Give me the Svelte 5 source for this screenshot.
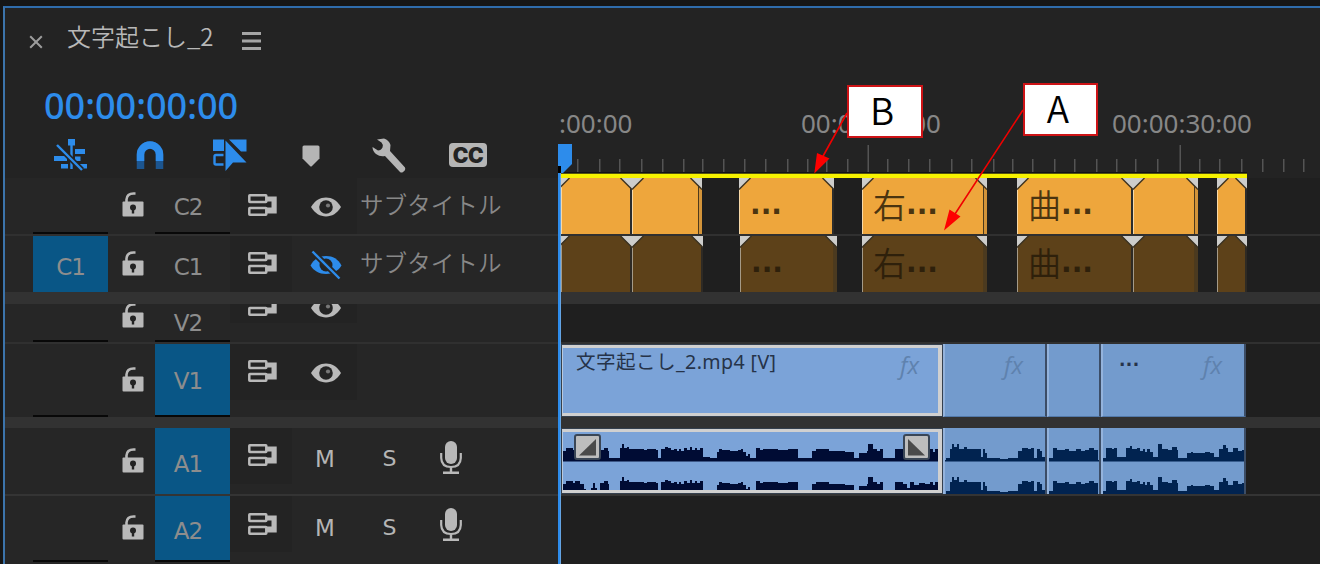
<script lang="ts">
  type Clip = { start: number; end: number; label?: string; fx?: boolean; selected?: boolean; edge?: string };

  const laneStart = 558;
  const laneWidth = 762;

  const tracks = [
    { id: 'c2', label: 'C2', kind: 'caption', source: '', target: false, visible: true },
    { id: 'c1', label: 'C1', kind: 'caption', source: 'C1', target: false, visible: false },
    { id: 'v2', label: 'V2', kind: 'video', source: '', target: false, visible: true },
    { id: 'v1', label: 'V1', kind: 'video', source: '', target: true, visible: true },
    { id: 'a1', label: 'A1', kind: 'audio', source: '', target: true, visible: true },
    { id: 'a2', label: 'A2', kind: 'audio', source: '', target: true, visible: true }
  ];

  const clips: Record<string, Clip[]> = {
    c2: [
      { start: 561, end: 632, edge: 'dark' },
      { start: 632, end: 702, edge: 'thin' },
      { start: 739, end: 834, label: '...', edge: 'dark' },
      { start: 862, end: 987, label: '右...', edge: 'thin' },
      { start: 1017, end: 1133, label: '曲...', edge: 'dark' },
      { start: 1133, end: 1198, edge: 'thin' },
      { start: 1217, end: 1247, edge: 'dark' }
    ],
    c1: [
      { start: 561, end: 632, edge: 'dark' },
      { start: 632, end: 703, edge: 'dark' },
      { start: 740, end: 837, label: '...', edge: 'thin' },
      { start: 862, end: 987, label: '右...', edge: 'thin' },
      { start: 1017, end: 1133, label: '曲...', edge: 'dark' },
      { start: 1133, end: 1198, edge: 'thin' },
      { start: 1217, end: 1247, edge: 'dark' }
    ],
    v1: [
      { start: 561, end: 943, label: '文字起こし_2.mp4 [V]', fx: true, selected: true },
      { start: 943, end: 1047, fx: true },
      { start: 1047, end: 1101 },
      { start: 1101, end: 1246, label: '...', fx: true }
    ],
    a1: [
      { start: 561, end: 943, selected: true },
      { start: 943, end: 1047 },
      { start: 1047, end: 1101 },
      { start: 1101, end: 1246 }
    ]
  };

  // [x, peak height] steps, each one holds until the next
  const peaks: [number, number][][] = [
    [
      [562, 10], [566, 13], [573, 11], [575, 13], [580, 10], [584, 5], [586, 3], [591, 6], [593, 11], [595, 6],
      [597, 3], [600, 11], [604, 13], [608, 10], [609, 3], [620, 13], [622, 17], [624, 13], [627, 14], [629, 12],
      [644, 11], [647, 12], [656, 11], [658, 3], [661, 12], [665, 14], [668, 13], [671, 11], [674, 12], [677, 10],
      [679, 12], [681, 10], [684, 13], [687, 11], [690, 14], [692, 11], [695, 13], [697, 11], [700, 13], [703, 4],
      [710, 3], [717, 9], [719, 12], [722, 11], [730, 10], [738, 11], [741, 12], [743, 9], [746, 5], [748, 7],
      [750, 3], [756, 13], [760, 11], [763, 12], [772, 12], [778, 11], [788, 12], [798, 3], [812, 10], [816, 12],
      [829, 10], [840, 10], [845, 9], [854, 3], [859, 8], [867, 10], [868, 17], [873, 12], [877, 10], [880, 12],
      [883, 3], [895, 12], [903, 10], [907, 6], [910, 12], [914, 9], [919, 11], [925, 10], [930, 12], [933, 9],
      [935, 12], [939, 10], [941, 3], [943, 3]
    ],
    [
      [946, 3], [950, 12], [952, 17], [954, 14], [957, 17], [959, 12], [964, 14], [967, 12], [978, 12], [981, 4],
      [983, 12], [985, 8], [987, 3], [1000, 2], [1008, 3], [1018, 10], [1022, 13], [1028, 12], [1031, 13], [1034, 3],
      [1037, 12], [1040, 10], [1042, 4], [1045, 4]
    ],
    [
      [1049, 3], [1053, 13], [1057, 11], [1065, 12], [1069, 10], [1076, 12], [1081, 10], [1085, 11], [1089, 13],
      [1094, 11], [1098, 11]
    ],
    [
      [1102, 3], [1106, 13], [1112, 12], [1114, 13], [1117, 4], [1126, 13], [1130, 15], [1132, 12], [1137, 13],
      [1140, 10], [1143, 12], [1145, 9], [1147, 12], [1150, 9], [1153, 4], [1158, 17], [1162, 12], [1168, 11],
      [1172, 14], [1177, 11], [1178, 3], [1187, 8], [1191, 9], [1193, 8], [1205, 9], [1210, 8], [1214, 4],
      [1219, 12], [1223, 16], [1226, 13], [1228, 9], [1233, 13], [1238, 10], [1242, 11], [1244, 11]
    ]
  ];

  const ticks = [
    577, 599, 619, 641, 662, 683, 702, 723, 744, 765, 787, 807, 826, 847, 887, 908, 929, 951, 971, 993, 1012, 1032,
    1054, 1074, 1096, 1116, 1135, 1157, 1199, 1219, 1241, 1262, 1283, 1303
  ];
  const majorTicks = [867.5, 1179.5];
  const marks = [
    { x: 559, text: ':00:00' },
    { x: 801, text: '00:00:15:00' },
    { x: 1112, text: '00:00:30:00' }
  ];

  function gapBefore(list: Clip[], i: number) {
    return list[i].start - (i === 0 ? laneStart : list[i - 1].end);
  }

  function wavePath(steps: [number, number][], left: number, base: number) {
    let d = `M${steps[0][0] - left} ${base}`;
    steps.forEach(([x, h], i) => {
      const next = steps[i + 1] ? steps[i + 1][0] : x;
      d += `V${base - h}H${next - left}`;
    });
    return d + `V${base}Z`;
  }
</script>

{#snippet corner(side: string)}
  <svg class="corner {side}" width="12" height="12" viewBox="0 0 12 12">
    <path d="M0 0H11L0 11Z" fill="#cdcdcb" />
    <path d="M11.5 0L0 11.5" stroke="#3d3424" stroke-width="1.4" />
  </svg>
{/snippet}

{#snippet eye()}
  <svg width="32" height="20" viewBox="0 0 32 20">
    <path d="M1 10C5 3.5 10 .6 16 .6S27 3.5 31 10C27 16.5 22 19.4 16 19.4S5 16.5 1 10Z" fill="#b9b9b9" />
    <circle cx="16" cy="10" r="6.8" fill="#232323" />
    <circle cx="18" cy="8.5" r="2.1" fill="#777" />
  </svg>
{/snippet}

{#snippet eyeOff()}
  <svg width="34" height="30" viewBox="0 0 34 30">
    <path d="M1.5 15.500C5 9 10 6 17 6S29 9 32.500 15.500C29 21 24 24 17 24S5 21 1.500 15.500Z" fill="#2d8ceb" />
    <circle cx="17" cy="15" r="6.500" fill="#232323" />
    <path d="M3.500 1.500L30.500 28.500" stroke="#262626" stroke-width="6" />
    <path d="M3.500 1.500L30.500 28.500" stroke="#2d8ceb" stroke-width="2.400" />
  </svg>
{/snippet}

<div class="panel">
  <div class="tab">
    <svg class="close" width="14" height="14" viewBox="0 0 14 14">
      <path d="M1.200 1.200L12.800 12.800M12.800 1.200L1.200 12.800" stroke="#9c9c9c" stroke-width="2" />
    </svg>
    <span class="title">文字起こし_2</span>
    <svg width="19" height="18" viewBox="0 0 19 18">
      <path d="M0 1.500H19M0 9H19M0 16.500H19" stroke="#a5a5a5" stroke-width="2.800" />
    </svg>
  </div>

  <div class="top">
    <div class="controls">
      <div class="timecode">00:00:00:00</div>
      <div class="toolbar">
        <svg width="35" height="33" viewBox="0 0 35 33" fill="#2d8ceb">
          <rect x="15" y="0" width="7" height="6.500" />
          <rect x="17.300" y="6" width="2.400" height="24" />
          <rect x="22" y="10" width="10" height="5" />
          <rect x="1" y="17" width="13" height="5" />
          <rect x="22" y="17.500" width="5.500" height="4.500" />
          <rect x="8" y="25" width="7" height="4.500" />
          <rect x="24" y="25" width="10" height="4.500" />
          <path d="M4 6L29 31" stroke="#232323" stroke-width="5.400" />
          <path d="M4 6L29 31" stroke="#2d8ceb" stroke-width="2.400" />
        </svg>
        <svg width="28" height="30" viewBox="0 0 28 30">
          <path d="M4.500 29V14.500a9.500 9.500 0 0 1 19 0V29" fill="none" stroke="#1c558f" stroke-width="7.500" />
          <path d="M4.500 21V14.500a9.500 9.500 0 0 1 19 0V21" fill="none" stroke="#2d8ceb" stroke-width="7.500" />
        </svg>
        <svg width="34" height="34" viewBox="0 0 34 34">
          <path d="M0 1.500H11V13H0ZM16 1.500H33.500V13.500H28Z" fill="#2d8ceb" />
          <path d="M10.500 17H3q-1.500 0-1.500 1.500V25q0 1.500 1.500 1.500H10.500" fill="none" stroke="#2d8ceb" stroke-width="2.400" />
          <path d="M12.500 2.500V33L20 24.500H33.500Z" fill="#2d8ceb" />
        </svg>
        <svg class="marker" width="18" height="22" viewBox="0 0 18 22">
          <path d="M2 .500H16Q17.500 .500 17.500 2V13.500L9.500 21.500H8.500L.500 13.500V2Q.500 .500 2 .500Z" fill="#b5b5b5" />
        </svg>
        <svg width="34" height="35" viewBox="0 0 34 35">
          <path d="M5 1.500L12 .500Q17 2 18.500 7L18 13L33 29.500Q34 32 31 34Q29.500 35 28 34L13 18Q8 19 4 16Q.500 13 .500 9L6 12.500Q9 12.500 10.500 9.500Q11.500 6.500 9.500 4.500Z" fill="#b5b5b5" />
        </svg>
        <span class="cc">CC</span>
      </div>
    </div>

    <svg class="ruler" width={laneWidth} height="98" viewBox="{laneStart} 80 {laneWidth} 98">
      {#each marks as mark}
        <text x={mark.x} y="133">{mark.text}</text>
      {/each}
      {#each ticks as x}
        <rect {x} y="159" width="1.500" height="13" fill="#545454" />
      {/each}
      {#each majorTicks as x}
        <rect {x} y="145" width="1.500" height="27" fill="#545454" />
      {/each}
      <rect x="561" y="172" width="686" height="2" fill="#101018" />
      <rect x="561" y="173.700" width="686" height="4.300" fill="#f6f200" />
      <path d="M558 144H572V164L563 173H558Z" fill="#2d8ceb" />
      <rect x="558" y="166" width="3" height="7" fill="#000" />
    </svg>
  </div>

  {#each tracks as track}
    <div class="track {track.id} {track.kind}">
      <div class="head">
        <div class="patch" class:on={track.source}><span class="source">{track.source}</span></div>
        <div class="lock">
          <svg width="22" height="25" viewBox="0 0 22 25">
            <path d="M4.500 11V7.500Q5 1.500 11.500 1.500H13.500" fill="none" stroke="#b9b9b9" stroke-width="2.600" />
            <rect x=".500" y="9.500" width="21" height="15" rx="1" fill="#b9b9b9" />
            <circle cx="11" cy="15.500" r="3" fill="#232323" />
            <rect x="9.800" y="16" width="2.400" height="5.500" fill="#232323" />
          </svg>
        </div>
        <div class="patch" class:on={track.target}><span>{track.label}</span></div>
        <div class="sync">
          <svg width="29" height="22" viewBox="0 0 29 22">
            <path d="M18 2.500H28.700V19.500H18V13.500H23.500V7.500H18Z" fill="#b9b9b9" />
            <rect x="1.300" y="1.300" width="17" height="6.700" rx=".500" fill="#232323" stroke="#b9b9b9" stroke-width="2.500" />
            <rect x="1.300" y="14" width="17" height="6.700" rx=".500" fill="#232323" stroke="#b9b9b9" stroke-width="2.500" />
          </svg>
        </div>
        {#if track.kind === 'audio'}
          <div class="toggle">M</div>
          <div class="toggle solo">S</div>
          <div class="mic">
            <svg width="22" height="33" viewBox="0 0 22 33">
              <rect x="5" y="0" width="12" height="23" rx="6" fill="#b9b9b9" />
              <path d="M1.200 12V17Q1.500 26 11 26T20.800 17V12" fill="none" stroke="#b9b9b9" stroke-width="2.200" />
              <path d="M11 26V32M3 31.700H19" stroke="#b9b9b9" stroke-width="2.400" />
            </svg>
          </div>
        {:else}
          <div class="eye">
            {#if track.visible}{@render eye()}{:else}{@render eyeOff()}{/if}
          </div>
          {#if track.kind === 'caption'}
            <div class="name">サブタイトル</div>
          {/if}
        {/if}
      </div>

      <div class="lane">
        {#each clips[track.id] ?? [] as clip, i}
          <div
            class="clip {clip.edge ?? ''}"
            class:selected={clip.selected}
            class:first={i === 0}
            style:margin-left="{gapBefore(clips[track.id], i)}px"
            style:width="{clip.end - clip.start}px"
          >
            {#if track.kind === 'caption'}
              {@render corner('left')}
              {@render corner('right')}
              {#if clip.label}
                {#if clip.label.length > 3}<span class="kanji">{clip.label[0]}</span>{/if}
                <span class="dots">...</span>
              {/if}
            {:else if track.kind === 'video'}
              {#if clip.label}<span class="label" class:short={clip.label === '...'}>{clip.label}</span>{/if}
              {#if clip.fx}<span class="fx">fx</span>{/if}
            {:else}
              <svg class="wave" width={clip.end - clip.start} height="66">
                <path d={wavePath(peaks[i], clip.start, 33)} />
                <path d={wavePath(peaks[i], clip.start, 66)} />
                <rect x="1" y="32" width={clip.end - clip.start - 3} height="1.500" />
              </svg>
              {#if clip.selected}
                <div class="fades">
                  <svg width="27" height="26" viewBox="0 0 27 26">
                    <rect x="1" y="1" width="25" height="24" rx="2" fill="#bdbdbd" stroke="#3a4656" stroke-width="2" />
                    <path d="M5 21.500L22 5V21.500Z" fill="#4a4a4a" />
                  </svg>
                  <svg width="27" height="26" viewBox="0 0 27 26">
                    <rect x="1" y="1" width="25" height="24" rx="2" fill="#bdbdbd" stroke="#3a4656" stroke-width="2" />
                    <path d="M5 5V21.500H22Z" fill="#4a4a4a" />
                  </svg>
                </div>
              {/if}
            {/if}
          </div>
        {/each}
      </div>
    </div>
  {/each}
</div>

<div class="playhead"></div>

<svg class="arrows" width="1320" height="564" viewBox="0 0 1320 564">
  <path d="M847 113L822 158M1023 110L955 214" stroke="#f00000" stroke-width="1.600" />
  <path d="M814.300 173.500L817 153L829.500 158.500ZM944 230.500L949.500 209.500L960.500 216.500Z" fill="#fe0000" />
</svg>
<div class="callout b">B</div>
<div class="callout a">A</div>

<style>
  :global(body) {
    background: #161616;
    overflow: hidden;
  }

  .panel {
    margin: 6px 0 0 3px;
    width: 1315px;
    height: 556px;
    border-top: 2px solid #2f6cab;
    border-left: 2px solid #3c74ab;
    background: #232323;
    font-family: 'Noto Sans', 'Noto Sans CJK JP', sans-serif;
    overflow: hidden;
  }

  svg {
    display: block;
    flex: none;
  }

  .tab {
    height: 72px;
    box-sizing: border-box;
    display: flex;
    align-items: flex-start;
    padding: 24px 0 0 24px;
  }

  .tab .close {
    margin-top: 3px;
  }

  .title {
    width: 175px;
    margin: -14px 0 0 24px;
    font: 350 24px/36px 'Noto Sans CJK JP', sans-serif;
    color: #b8b8b8;
    white-space: nowrap;
  }

  .top {
    display: flex;
    height: 98px;
  }

  .controls {
    width: 553px;
    flex: none;
  }

  .timecode {
    height: 50px;
    padding-left: 39px;
    font-size: 36px;
    font-weight: 500;
    line-height: 51px;
    color: #2d8ceb;
  }

  .toolbar {
    display: grid;
    grid-template-columns: 80px 80px 80px 80px 78px 80px;
    height: 50px;
    padding-left: 25px;
    place-items: center;
  }

  .toolbar .marker {
    margin: 2px 0 0 2px;
  }

  .cc {
    width: 38px;
    height: 24px;
    border-radius: 4px;
    background: #b5b5b5;
    color: #232323;
    font: 900 21px/25px Inter, 'Liberation Sans', sans-serif;
    letter-spacing: -0.5px;
    text-align: center;
  }

  .ruler text {
    font-size: 26px;
    fill: #878787;
  }

  .track {
    display: flex;
    box-sizing: border-box;
    overflow: hidden;
  }

  .c2 { height: 58px; border-bottom: 2px solid #303030; --lock: 14px; --label: 29px; --sync: 16px; --eye: 19px; --name: 26px; }
  .c1 { height: 68px; border-bottom: 12px solid #323232; --lock: 15px; --label: 31px; --sync: 16px; --eye: 14px; --name: 26px; }
  .v2 { height: 40px; border-bottom: 2px solid #303030; --lock: -1px; --label: 19px; --sync: -10px; --eye: -6px; }
  .v1 { height: 84px; border-bottom: 11px solid #323232; --lock: 23px; --label: 37px; --sync: 16px; --eye: 19px; }
  .a1 { height: 68px; border-bottom: 2px solid #343434; --lock: 20px; --label: 36px; --sync: 16px; --toggle: 31px; --mic: 13px; }
  .a2 { height: 70px; --lock: 19px; --label: 35px; --sync: 17px; --toggle: 32px; --mic: 12px; }

  .head {
    width: 553px;
    flex: none;
    box-sizing: border-box;
    padding-left: 28px;
    display: grid;
    grid-template-columns: 75px 47px 75px 62px 65px 64px 60px 1fr;
    justify-items: center;
    background: #262626;
    color: #949494;
  }

  .patch {
    width: 75px;
    box-sizing: border-box;
    border-bottom: 2px solid #080808;
    font: 23px/24px 'DejaVu Sans', sans-serif;
    letter-spacing: -1px;
    text-align: center;
    color: #8d8d8d;
  }

  .patch span {
    display: block;
    margin: calc(var(--label) - 12px) 9px 0 0;
  }

  .patch .source {
    margin-right: 0;
  }

  .patch.on {
    background: #095686;
  }

  .c1 .patch {
    border-bottom: 0;
  }

  .a1 .patch {
    border-bottom-color: transparent;
  }

  .a2 .patch {
    height: 66px;
  }

  .lock svg {
    margin: var(--lock) 0 0 2px;
  }

  .sync,
  .eye {
    width: 100%;
    display: flex;
    justify-content: center;
    background: #232323;
  }

  .v2 .sync,
  .v2 .eye {
    height: 19px;
    overflow: hidden;
  }

  .v1 .sync,
  .v1 .eye {
    height: 56px;
  }

  .audio .sync {
    height: 56px;
  }

  .sync svg {
    margin: var(--sync) 0 0 2px;
  }

  .eye svg {
    margin: var(--eye) 0 0 2px;
  }

  .c1 .eye {
    background: none;
  }

  .toggle {
    margin: calc(var(--toggle) - 12px) 0 0 1px;
    font: 23px/24px 'DejaVu Sans', sans-serif;
    color: #b5b5b5;
  }

  .solo {
    font-size: 22px;
  }

  .mic svg {
    margin-top: var(--mic);
  }

  .name {
    grid-column: 6 / -1;
    justify-self: start;
    margin: calc(var(--name) - 18px) 0 0 3px;
    font: 350 23.6px/36px 'Noto Sans CJK JP', sans-serif;
    white-space: nowrap;
    color: #888;
  }

  .lane {
    flex: 1;
    display: flex;
    background: #1f1f1f;
    overflow: hidden;
  }

  .clip {
    position: relative;
    flex: none;
    box-sizing: border-box;
    display: flex;
    overflow: hidden;
  }

  .caption .clip {
    --body: #eea63c;
    --light: #f7d9a8;
    --shade: #2c2c2c;
    --rim: #d3943a;
    background: var(--body);
    padding-left: 11px;
    color: #4a3410;
  }

  .c1.caption .clip {
    --body: #5d4119;
    --light: #a49a88;
    --shade: #2e2a24;
    --rim: #4b3a20;
    color: #2e200b;
  }

  .caption .clip.dark {
    box-shadow: inset 1px 0 var(--light), inset -2px 0 var(--shade);
  }

  .caption .clip.thin {
    box-shadow: inset 1px 0 var(--light), inset -3px 0 var(--rim), inset -4px 0 #4d3a1c;
  }

  .corner {
    position: absolute;
    top: 0;
    left: 0;
  }

  .corner.right {
    left: auto;
    right: 0;
    transform: scaleX(-1);
  }

  .first .corner.left {
    left: -3px;
  }

  .kanji {
    font: 350 33px/53px 'Noto Sans CJK JP', sans-serif;
  }

  .dots {
    font: bold 28px/54px 'DejaVu Sans', sans-serif;
    letter-spacing: 0;
  }

  .v1 .clip,
  .a1 .clip {
    background: #739bcd;
    border-right: 2px solid #3c4d66;
    border-left: 2px solid #94b3dc;
  }

  .v1 .clip {
    justify-content: flex-end;
    border-bottom: 1px solid #5279aa;
  }

  .v1 .clip.selected,
  .a1 .clip.selected {
    background: #7ba3d8;
    border: 4px solid #d0d0d0;
    border-left: 2px solid #b9c9dd;
    border-right-width: 5px;
    outline: 1px solid #35404e;
    outline-offset: -1px;
  }

  .label {
    flex: 1;
    padding-left: 13px;
    font: 19.6px/28px 'Noto Sans', 'Noto Sans CJK JP', sans-serif;
    letter-spacing: 0.4px;
    white-space: nowrap;
    color: #263349;
  }

  .label.short {
    padding-left: 16px;
    font: bold 17px/33px 'DejaVu Sans', sans-serif;
  }

  .fx {
    margin: 4px 22px 0 0;
    font: italic 400 24px/34px 'Open Sans', sans-serif;
    color: #5f82ae;
  }

  .selected .fx {
    margin: 0 19px 0 0;
  }

  .wave {
    margin-left: -2px;
    fill: #012350;
  }

  .selected .wave {
    margin-top: -4px;
    fill: #000c34;
  }

  .fades {
    position: absolute;
    top: 2px;
    left: 11px;
    right: 8px;
    display: flex;
    justify-content: space-between;
  }

  .playhead {
    position: absolute;
    left: 558px;
    top: 173px;
    width: 2px;
    height: 391px;
    background: #2d8ceb;
    border-right: 1px solid #64a4e4;
  }

  .arrows {
    position: absolute;
    left: 0;
    top: 0;
  }

  .callout {
    position: absolute;
    box-sizing: border-box;
    width: 76px;
    height: 53px;
    border: 2px solid #cd1316;
    background: #fff;
    color: #000;
    font: 350 37px/45px 'Noto Sans CJK JP', sans-serif;
    text-align: center;
  }

  .callout.b {
    left: 847px;
    top: 85px;
    padding-right: 6px;
  }

  .callout.a {
    left: 1023px;
    top: 83px;
    width: 75px;
    padding-right: 5px;
  }
</style>
